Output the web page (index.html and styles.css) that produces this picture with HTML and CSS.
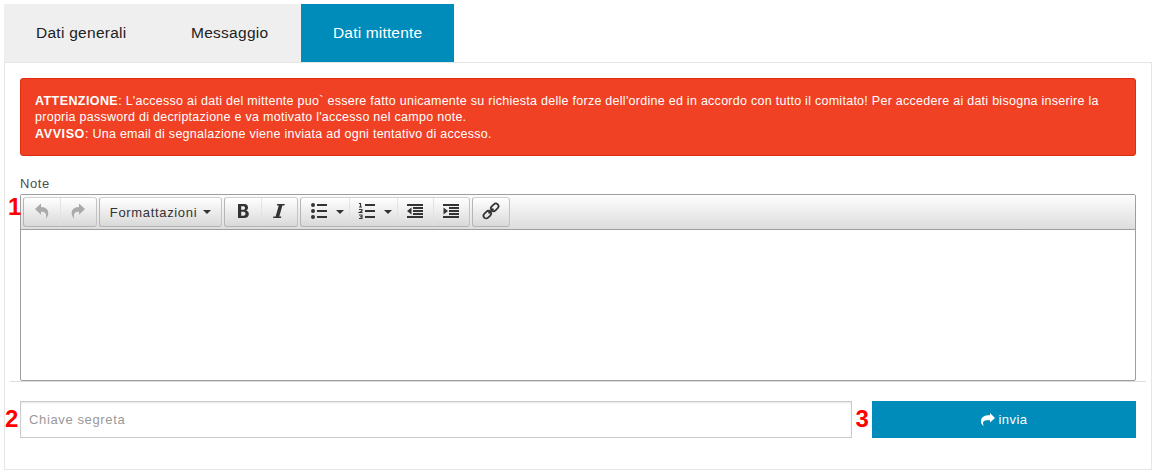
FILE: index.html
```html
<!DOCTYPE html>
<html lang="it">
<head>
<meta charset="utf-8">
<title>Dati mittente</title>
<link rel="stylesheet" href="styles.css">
</head>
<body>
<nav class="tabs">
  <a class="tab tab-general"><span>Dati generali</span></a>
  <a class="tab tab-message"><span>Messaggio</span></a>
  <a class="tab tab-sender active"><span>Dati mittente</span></a>
</nav>
<main class="panel">
  <div class="alert">
    <div><b class="warning">ATTENZIONE</b><span>: L'accesso ai dati del mittente puo` essere fatto unicamente su richiesta delle forze dell'ordine ed in accordo con tutto il comitato! Per accedere ai dati bisogna inserire la</span></div>
    <div><span>propria password di decriptazione e va motivato l'accesso nel campo note.</span></div>
    <div><b class="notice">AVVISO</b><span>: Una email di segnalazione viene inviata ad ogni tentativo di accesso.</span></div>
  </div>
  <label class="note-label"><span>Note</span></label>
  <section class="editor">
    <span class="marker marker-1">1</span>
    <div class="toolbar">
      <div class="group">
        <button class="tool"><svg width="18" height="18" viewBox="0 0 18 18"><path fill="#aaa" d="M2 7 8 1.600V5c5 .1 7.800 3 7.200 7.200-.2 1.800-1.200 3.400-2.600 4.300.8-2 .8-4-.2-5.200C11.400 10 10 9.700 8 9.800v2.900z"/></svg></button>
        <button class="tool"><svg width="18" height="18" viewBox="0 0 18 18"><path fill="#aaa" d="M16 7 10 1.600V5c-5 .1-7.800 3-7.200 7.200.2 1.800 1.200 3.400 2.600 4.300-.8-2-.8-4 .2-5.200C6.600 10 8 9.700 10 9.800v2.900z"/></svg></button>
      </div>
      <div class="group">
        <button class="tool format"><span>Formattazioni</span><i class="caret"></i></button>
      </div>
      <div class="group">
        <button class="tool"><svg width="18" height="18" viewBox="0 0 18 18"><path fill="#333" fill-rule="evenodd" d="M4 2h5.500C13 2 14 3.600 14 5.600c0 1.500-.7 2.500-1.900 3 1.700.4 2.700 1.500 2.700 3.400 0 2.600-1.700 4-4.800 4H4zm3 2.200v3.500h1.900c1.400 0 2.100-.6 2.100-1.800S10.400 4.200 9 4.200zm0 5.600v3.900h2.300c1.400 0 2.200-.6 2.200-1.900 0-1.400-.9-2-2.400-2z"/><path stroke="#333" stroke-width="1" d="M6.700 2v14"/></svg></button>
        <button class="tool"><svg width="18" height="18" viewBox="0 0 18 18"><path fill="#333" d="M7.300 2h7.500l-.4 1.500h-2L9.300 14.500h2l-.4 1.500H3l.4-1.500h2.200L8.800 3.500H6.900z"/></svg></button>
      </div>
      <div class="group">
        <button class="tool split"><svg width="18" height="18" viewBox="0 0 18 18"><g fill="#333"><circle cx="3" cy="3" r="2"/><circle cx="3" cy="9" r="2"/><circle cx="3" cy="15" r="2"/><path d="M7 2h10v2H7zM7 8h10v2H7zM7 14h10v2H7z"/></g></svg><i class="caret"></i></button>
        <button class="tool split"><svg width="18" height="18" viewBox="0 0 18 18"><path fill="#333" d="M7 2h10v2H7zM7 8h10v2H7zM7 14h10v2H7z"/><path fill="none" stroke="#333" stroke-width="1.100" d="M1 1.500h1.500V5M1 5h3M1 7.500h3V9L1.500 10.500H4.500M1 13h3v3.500H1M2 14.700h2"/></svg><i class="caret"></i></button>
        <button class="tool"><svg width="18" height="18" viewBox="0 0 18 18"><path fill="#333" d="M1 2h16v2H1zM7 5h10v2H7zM7 8h10v2H7zM7 11h10v2H7zM1 14h16v2H1zM5.500 5.500v7L1 9z"/></svg></button>
        <button class="tool"><svg width="18" height="18" viewBox="0 0 18 18"><path fill="#333" d="M1 2h16v2H1zM7 5h10v2H7zM7 8h10v2H7zM7 11h10v2H7zM1 14h16v2H1zM1.500 5.500v7L6 9z"/></svg></button>
      </div>
      <div class="group">
        <button class="tool"><svg width="18" height="18" viewBox="0 0 18 18"><g fill="none" stroke="#333" stroke-width="1.700" transform="rotate(-45 9 9)"><rect x="-.5" y="6.300" width="8.500" height="5.400" rx="2.700"/><rect x="10" y="6.300" width="8.500" height="5.400" rx="2.700"/><path d="M5.500 9h7"/></g></svg></button>
      </div>
    </div>
    <div class="canvas"></div>
  </section>
  <div class="rule"></div>
  <div class="send-row">
    <div class="key"><span class="marker marker-2">2</span><span class="placeholder">Chiave segreta</span></div>
    <button class="send"><span class="marker marker-3">3</span><svg width="14" height="14" viewBox="0 0 14 14"><path fill="#fff" d="M9 0 14 5 9 9.600V7.300C5 6.900 2.800 7.400 2.200 9c-.4 1-.1 2.200.5 4C.8 11.800 0 10.200 0 8.200 0 4 3.500 2.200 9 2.300z"/></svg><span class="send-text">invia</span></button>
  </div>
</main>
</body>
</html>
```
FILE: styles.css
```css
* { box-sizing: border-box; }
body { margin: 4px 5px 5px 4px; background: #fff; font-family: "Liberation Sans", Arial, sans-serif; font-size: 13px; color: #4d4d4d; }
button { margin: 0; border: 0; background: none; font: inherit; color: inherit; }
svg { display: block; flex: none; overflow: visible; }
.tabs { display: flex; height: 58px; }
.tab { display: flex; align-items: center; padding-left: 32px; background: #efefef; color: #222; font-size: 15.5px; letter-spacing: .27px; white-space: nowrap; }
.tab-general { width: 155px; }
.tab-message { width: 142px; }
.tab-sender { width: 153px; letter-spacing: .17px; }
.tab.active { background: #008cba; color: #fff; }
.panel { height: 408px; padding: 15px; border: 1px solid #e6e6e6; }
.alert { height: 78px; padding: 14px; border: 1px solid #de2d0f; border-radius: 3px; background: #f04124; color: #fff; font-size: 12.5px; letter-spacing: .27px; line-height: 16.4px; white-space: nowrap; }
.warning { letter-spacing: .42px; }
.notice { letter-spacing: .6px; }
.note-label { display: block; height: 38px; padding-top: 18px; line-height: 20px; letter-spacing: .6px; }
.editor { position: relative; height: 187px; border: 1px solid #9e9e9e; border-radius: 2px; }
.toolbar { display: flex; gap: 2px; height: 35px; padding: 2px; border-bottom: 1px solid #9e9e9e; background: linear-gradient(#fdfdfd, #ddd); }
.group { display: flex; height: 30px; border: 1px solid #c4c4c4; border-color: #d0d0d0 #c4c4c4 #b5b5b5 #b5b5b5; border-radius: 3px; background: linear-gradient(#fff, #d9d9d9); }
.tool { display: flex; align-items: center; justify-content: center; width: 36px; padding: 0; }
.tool + .tool { box-shadow: inset 1px 0 #e3e3e3; }
.tool svg { position: relative; top: -1px; }
.tool.format { width: 121px; gap: 6px; color: #333; letter-spacing: .67px; }
.tool.split { width: 48px; gap: 8px; padding-left: 4px; }
.caret { border: 4.5px solid transparent; border-width: 4px 4px 0; border-top-color: #333; }
.canvas { height: 150px; }
.rule { height: 1px; margin: 0 -10px; background: #ddd; }
.send-row { display: flex; gap: 20px; padding-top: 19px; }
.key { position: relative; display: flex; align-items: center; width: 832px; height: 37px; padding-left: 8px; border: 1px solid #ccc; box-shadow: inset 0 1px 2px rgba(0,0,0,.1); color: #999; letter-spacing: .63px; }
.send { position: relative; display: flex; align-items: center; justify-content: center; width: 264px; height: 37px; gap: 4px; padding: 0; background: #008cba; color: #fff; letter-spacing: .45px; }
.marker { position: absolute; color: #f00; font-size: 24px; font-weight: bold; line-height: 24px; letter-spacing: 0; }
.marker-1 { left: -13px; top: 0; }
.marker-2 { left: -16px; top: 5px; }
.marker-3 { left: -16.500px; top: 6px; }
```
